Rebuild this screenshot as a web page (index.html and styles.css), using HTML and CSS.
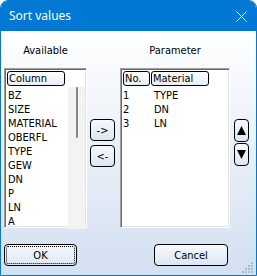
FILE: index.html
```html
<html>
<head>
  <title>Sort values</title>
  <link rel="stylesheet" href="styles.css">
</head>
<body>
  <div class="window">
    <div class="titlebar">
      <span class="title">Sort values</span>
      <svg class="close" width="11" height="11" viewBox="0 0 11 11">
        <path d="M0.5 0.5 L10.5 10.5 M10.5 0.5 L0.5 10.5" stroke="#fff" stroke-width="1" fill="none"/>
      </svg>
    </div>

    <div class="content">
      <div class="main">
        <div class="column col-available">
          <div class="label">Available</div>
          <div class="listbox">
            <div class="list-head">
              <span class="head-cell head-column">Column</span>
            </div>
            <div class="list-body">
              <ul class="items">
                <li>BZ</li>
                <li>SIZE</li>
                <li>MATERIAL</li>
                <li>OBERFL</li>
                <li>TYPE</li>
                <li>GEW</li>
                <li>DN</li>
                <li>P</li>
                <li>LN</li>
                <li>A</li>
              </ul>
              <div class="scrollbar"><div class="thumb"></div></div>
            </div>
          </div>
        </div>

        <div class="move-buttons">
          <button class="btn move">-&gt;</button>
          <button class="btn move">&lt;-</button>
        </div>

        <div class="column col-parameter">
          <div class="label">Parameter</div>
          <div class="listbox">
            <div class="list-head">
              <span class="head-cell head-no">No.</span>
              <span class="head-cell head-material">Material</span>
            </div>
            <div class="list-body">
              <ul class="items params">
                <li><span class="num">1</span><span>TYPE</span></li>
                <li><span class="num">2</span><span>DN</span></li>
                <li><span class="num">3</span><span>LN</span></li>
              </ul>
            </div>
          </div>
        </div>

        <div class="order-buttons">
          <button class="btn order">
            <svg width="9" height="9" viewBox="0 0 9 9"><polygon points="4.5,0 9,9 0,9" fill="#000"/></svg>
          </button>
          <button class="btn order">
            <svg width="9" height="9" viewBox="0 0 9 9"><polygon points="0,0 9,0 4.5,9" fill="#000"/></svg>
          </button>
        </div>
      </div>

      <div class="footer">
        <button class="btn dialog default">OK</button>
        <button class="btn dialog">Cancel</button>
      </div>
    </div>

    <svg class="grip" width="12" height="12" viewBox="0 0 12 12">
      <rect x="9" y="0" width="2" height="2" fill="#b0b8c4"/>
      <rect x="6" y="3" width="2" height="2" fill="#b0b8c4"/>
      <rect x="9" y="3" width="2" height="2" fill="#b0b8c4"/>
      <rect x="3" y="6" width="2" height="2" fill="#b0b8c4"/>
      <rect x="6" y="6" width="2" height="2" fill="#b0b8c4"/>
      <rect x="9" y="6" width="2" height="2" fill="#b0b8c4"/>
      <rect x="0" y="9" width="2" height="2" fill="#b0b8c4"/>
      <rect x="3" y="9" width="2" height="2" fill="#b0b8c4"/>
      <rect x="6" y="9" width="2" height="2" fill="#b0b8c4"/>
      <rect x="9" y="9" width="2" height="2" fill="#b0b8c4"/>
    </svg>
  </div>
</body>
</html>
```

FILE: styles.css
```css
body {
  margin: 0;
  background: #fff;
  font-family: "DejaVu Sans Condensed", "DejaVu Sans", sans-serif;
  font-stretch: condensed;
  font-size: 11px;
  color: #000;
}
.window {
  width: 257px;
  height: 276px;
  box-sizing: border-box;
  border: 1px solid #0078d4;
  border-radius: 8px 8px 0 0;
  overflow: hidden;
  display: flex;
  flex-direction: column;
  position: relative;
}
.titlebar {
  height: 30px;
  flex: none;
  background: #0078d4;
  display: flex;
  align-items: center;
  justify-content: space-between;
  padding: 0 9px 0 8px;
}
.title {
  font-family: "Noto Sans", "Open Sans", sans-serif;
  font-stretch: normal;
  font-size: 12px;
  line-height: 16px;
  color: #fff;
}
.close {
  display: block;
  margin-top: 1px;
}
.content {
  flex: 1;
  background: linear-gradient(#ffffff, #d3e0f1);
  padding: 13px 0 0 3px;
}
.main {
  display: flex;
  align-items: flex-start;
}
.col-available {
  width: 83px;
}
.col-parameter {
  width: 110px;
  margin-left: 5px;
}
.label {
  height: 24px;
  line-height: 13px;
  text-align: center;
}
.listbox {
  height: 160px;
  box-sizing: border-box;
  border: 1px solid;
  border-color: #a0a0a0 #ffffff #ffffff #a0a0a0;
  box-shadow: inset 1px 1px #696969, inset -1px -1px #e3e3e3;
  background: #fff;
  display: flex;
  flex-direction: column;
}
.list-head {
  height: 18px;
  flex: none;
  box-sizing: border-box;
  padding: 2px 0 0 2px;
  display: flex;
  gap: 1px;
}
.head-cell {
  height: 15px;
  box-sizing: border-box;
  border: 1px solid #000;
  border-radius: 3px;
  background: linear-gradient(#ffffff, #e9eef5);
  line-height: 13px;
  padding-left: 1px;
}
.head-column {
  width: 58px;
}
.head-no {
  width: 27px;
}
.head-material {
  width: 58px;
}
.list-body {
  flex: 1;
  display: flex;
  margin-bottom: 1px;
}
.items {
  flex: 1;
  list-style: none;
  margin: 0;
  padding: 2px 0 0 3px;
}
.items li {
  height: 14px;
  line-height: 14px;
}
.params {
  padding-left: 2px;
}
.params li {
  display: flex;
}
.num {
  width: 31px;
}
.scrollbar {
  width: 17px;
  margin-right: 1px;
  background: #f3f3f3;
}
.thumb {
  width: 2px;
  height: 51px;
  margin: 0 0 0 8px;
  border-radius: 1px;
  background: #858585;
}
.btn {
  font-family: "DejaVu Sans Condensed", "DejaVu Sans", sans-serif;
  font-stretch: condensed;
  font-size: 11px;
  color: #000;
  border: 1px solid #000;
  border-radius: 4px;
  background: linear-gradient(#f6f9fd, #dce6f3);
  padding: 0;
  margin: 0;
  box-sizing: border-box;
}
.move-buttons {
  display: flex;
  flex-direction: column;
  gap: 4px;
  margin: 75px 0 0 3px;
}
.move {
  width: 25px;
  height: 22px;
}
.order-buttons {
  display: flex;
  flex-direction: column;
  gap: 1px;
  margin: 75px 0 0 4px;
}
.order {
  width: 15px;
  height: 23px;
  display: flex;
  align-items: center;
  justify-content: center;
}
.order svg {
  display: block;
}
.footer {
  display: flex;
  gap: 77px;
  margin-top: 16px;
}
.dialog {
  width: 73px;
  height: 22px;
}
.dialog + .dialog {
  width: 74px;
}
.default {
  outline: 1px dotted #000;
  outline-offset: -3px;
}
.grip {
  position: absolute;
  right: 2px;
  bottom: 1px;
}
```
